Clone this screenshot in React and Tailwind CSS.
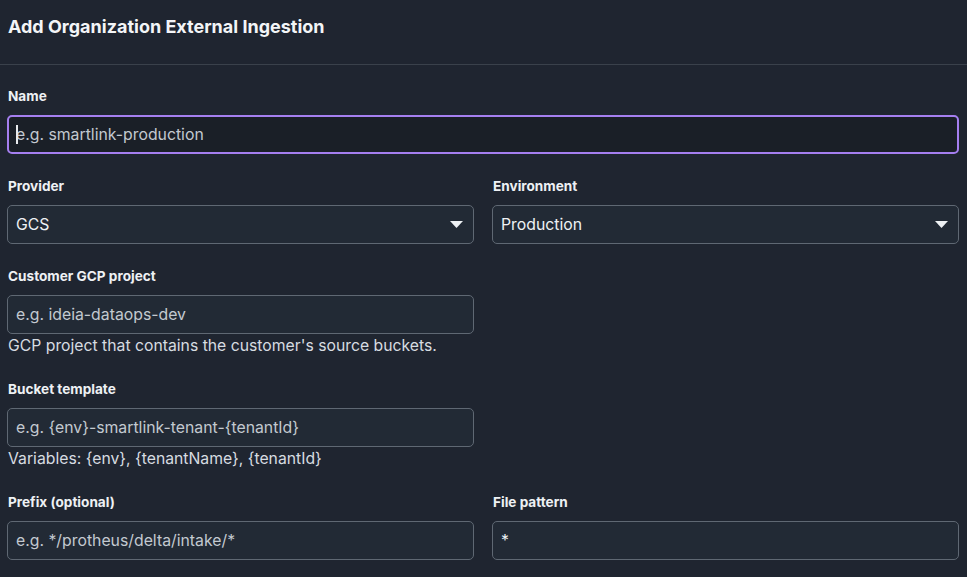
import React from "react";

const font = { fontFamily: "Inter, 'Noto Sans', sans-serif" };

function Label({ children }) {
  return (
    <div className="text-[13.6px] font-bold leading-[20px] text-[#eef1f4] mb-[9px]">
      {children}
    </div>
  );
}

function TextBox({ placeholder, focused, value }) {
  return (
    <div
      className={
        "relative h-[39px] rounded-[5px] flex items-center px-[8px] text-[15.8px] " +
        (focused
          ? "border-2 border-[#a57ff0] bg-[#1a1f27] pl-[7px]"
          : "border border-[#5f6873] bg-[#222a35]")
      }
    >
      {focused && <span className="absolute left-[7px] top-[8px] w-[2px] h-[19px] bg-[#e8eaed]" />}
      {value ? (
        <span className="text-[#eef1f4]">{value}</span>
      ) : (
        <span className="text-[#c3c9d0]">{placeholder}</span>
      )}
    </div>
  );
}

function Select({ value }) {
  return (
    <div className="h-[39px] rounded-[5px] border border-[#5f6873] bg-[#222a35] flex items-center justify-between pl-[8px] pr-[10px] text-[15.8px] text-[#eef1f4]">
      <span>{value}</span>
      <svg width="13" height="7" viewBox="0 0 13 7">
        <path d="M0 0 H13 L6.5 7 Z" fill="#eef1f4" />
      </svg>
    </div>
  );
}

function Helper({ children }) {
  return <div className="text-[15.75px] leading-[24px] text-[#d7dce1]">{children}</div>;
}

export default function App() {
  return (
    <div style={font} className="w-[967px] h-[577px] bg-[#1f2530] overflow-hidden">
      <div className="h-[65px] border-b border-[#3a414b] flex items-center px-[8px]">
        <h1 className="text-[18px] font-bold text-[#f3f5f7] -mt-[12px]">Add Organization External Ingestion</h1>
      </div>
      <div className="pl-[7px] pr-[8px] pt-[21px] flex flex-col gap-[22px]">
        <div>
          <div className="pl-[1px]"><Label>Name</Label></div>
          <TextBox focused placeholder="e.g. smartlink-production" />
        </div>
        <div className="grid grid-cols-2 gap-[18px]">
          <div>
            <div className="pl-[1px]"><Label>Provider</Label></div>
            <Select value="GCS" />
          </div>
          <div>
            <div className="pl-[1px]"><Label>Environment</Label></div>
            <Select value="Production" />
          </div>
        </div>
        <div className="grid grid-cols-2 gap-[18px]">
          <div>
            <div className="pl-[1px]"><Label>Customer GCP project</Label></div>
            <TextBox placeholder="e.g. ideia-dataops-dev" />
            <div className="pl-[1px]"><Helper>GCP project that contains the customer's source buckets.</Helper></div>
          </div>
        </div>
        <div className="grid grid-cols-2 gap-[18px] -mt-[1px]">
          <div>
            <div className="pl-[1px]"><Label>Bucket template</Label></div>
            <TextBox placeholder="e.g. {env}-smartlink-tenant-{tenantId}" />
            <div className="pl-[1px]"><Helper>Variables: {"{env}"}, {"{tenantName}"}, {"{tenantId}"}</Helper></div>
          </div>
        </div>
        <div className="grid grid-cols-2 gap-[18px] -mt-[1px]">
          <div>
            <div className="pl-[1px]"><Label>Prefix (optional)</Label></div>
            <TextBox placeholder="e.g. */protheus/delta/intake/*" />
          </div>
          <div>
            <div className="pl-[1px]"><Label>File pattern</Label></div>
            <TextBox value="*" />
          </div>
        </div>
      </div>
    </div>
  );
}
